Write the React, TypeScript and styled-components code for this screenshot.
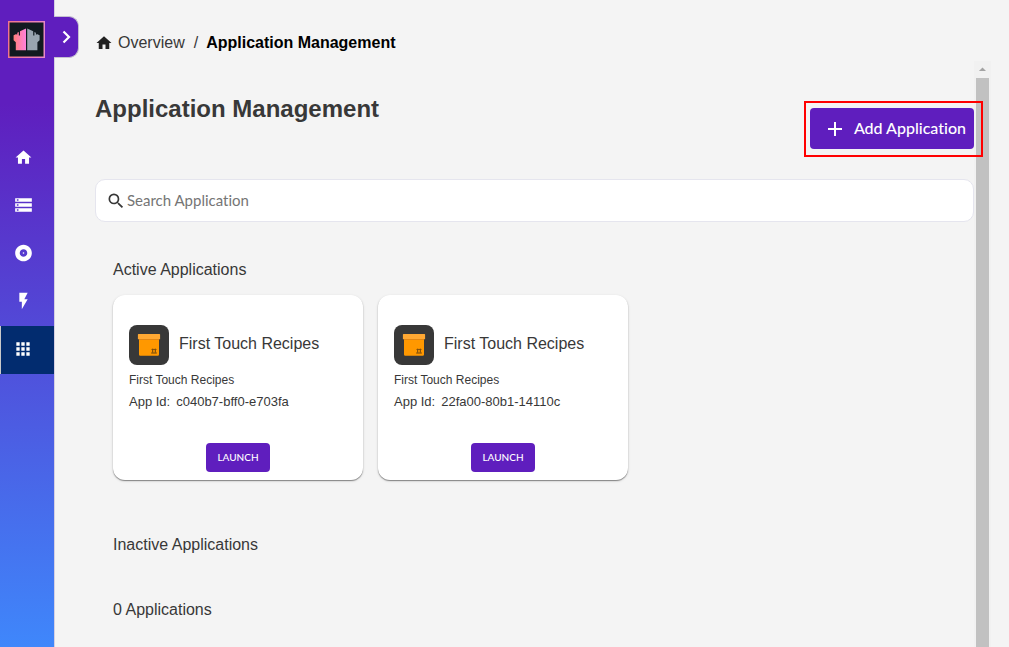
import React from "react";
import styled, { createGlobalStyle } from "styled-components";
import {
  MdAdd,
  MdAlbum,
  MdApps,
  MdArrowDropUp,
  MdFlashOn,
  MdHome,
  MdSearch,
  MdStorage,
} from "react-icons/md";

const sans = '"Liberation Sans", Arial, sans-serif';
const humanist = 'Lato, "Noto Sans", sans-serif';
const purple = "#5f1ebe";
const ink = "#383838";

const GlobalStyle = createGlobalStyle`
  *, *::before, *::after { box-sizing: border-box; }
  body { margin: 0; background: #f4f4f4; color: ${ink}; font-family: ${sans}; }
  h1, h2, h3, p, ul, ol { margin: 0; padding: 0; font-weight: 400; }
  ul, ol { list-style: none; }
  a { color: inherit; text-decoration: none; }
  button { border: 0; padding: 0; cursor: pointer; }
  svg { display: block; flex: none; }
`;

const Shell = styled.div`
  display: flex;
  height: 100vh;
  overflow: hidden;
`;

const Sidebar = styled.aside`
  position: relative;
  flex: none;
  width: 55px;
  border-right: 1px solid #d5d0e2;
  background: linear-gradient(180deg, ${purple} 0%, ${purple} 16%, #3f87fb 100%);
`;

const LogoLink = styled.a`
  display: block;
  padding: 21px 8px 76px;
`;

const Toggle = styled.button`
  position: absolute;
  top: 16px;
  left: 54px;
  display: flex;
  align-items: center;
  width: 25px;
  height: 42px;
  border: solid #c4bfd0;
  border-width: 1px 1px 1px 0;
  border-radius: 0 10px 10px 0;
  background: ${purple};
  color: #fff;
`;

const NavLink = styled.a<{ $active?: boolean }>`
  display: flex;
  align-items: center;
  height: 48px;
  padding-bottom: 2px;
  border-left: ${(p) => (p.$active ? "1px solid #c9c9c9" : "0")};
  background: ${(p) => (p.$active ? "#022c6f" : "transparent")};
  color: #fff;

  svg {
    width: ${(p) => (p.$active ? 44 : 47)}px;
  }
`;

const Main = styled.main`
  display: flex;
  flex: 1;
  flex-direction: column;
  min-width: 0;
`;

const Breadcrumb = styled.nav`
  flex: none;
  padding: 33px 40px 8px;

  ol {
    display: flex;
    align-items: center;
    font-size: 16px;
    line-height: 20px;
  }
`;

const Crumb = styled.li`
  display: flex;
  align-items: center;

  a {
    display: flex;
    align-items: center;
    gap: 5px;
  }

  & + &::before {
    content: "/";
    margin: 0 8px 0 9px;
  }

  &[aria-current] {
    color: #000;
    font-weight: 700;
  }

  &[aria-current]::before {
    color: ${ink};
    font-weight: 400;
  }
`;

const Body = styled.div`
  display: flex;
  flex: 1;
  min-height: 0;
  padding-right: 18px;
`;

const Content = styled.div`
  flex: 1;
  min-width: 0;
  padding-left: 40px;
`;

const ScrollTrack = styled.div`
  display: flex;
  flex: none;
  flex-direction: column;
  align-items: center;
  width: 17px;
  background: #f1f1f1;
  color: #a3a3a3;
`;

const ScrollThumb = styled.div`
  flex: 1;
  width: 13px;
  background: #c1c1c1;
`;

const PageHead = styled.header`
  display: flex;
  align-items: flex-start;
  justify-content: space-between;
  padding-top: 34px;

  h1 {
    font-size: 24px;
    font-weight: 700;
    line-height: 28px;
  }
`;

const Highlight = styled.div`
  position: relative;
  margin-top: 13px;

  &::after {
    content: "";
    position: absolute;
    inset: -7px -9px -8px -6px;
    border: 2px solid #f00;
    pointer-events: none;
  }
`;

const AddButton = styled.button`
  display: flex;
  align-items: center;
  gap: 7px;
  height: 41px;
  padding: 0 8px 0 13px;
  border-radius: 4px;
  background: ${purple};
  color: #fff;
  font: 500 16px/20px ${humanist};
  font-variant-ligatures: none;

  span {
    padding-bottom: 2px;
  }
`;

const SearchBox = styled.label`
  display: flex;
  align-items: center;
  height: 43px;
  margin-top: 30px;
  padding: 0 10px;
  gap: 1px;
  border: 1px solid #e5e5ee;
  border-radius: 10px;
  background: #fff;

  input {
    flex: 1;
    min-width: 0;
    border: 0;
    padding: 0 0 2px;
    outline: 0;
    background: transparent;
    color: ${ink};
    font: 400 15px/20px ${humanist};
    font-variant-ligatures: none;
  }

  input::placeholder {
    color: #757575;
    opacity: 1;
  }
`;

const Section = styled.section`
  padding: 38px 18px 17px;

  h2,
  > p {
    font-size: 16px;
    line-height: 20px;
  }

  > p {
    margin-top: 45px;
  }
`;

const Cards = styled.ul`
  display: flex;
  flex-wrap: wrap;
  gap: 15px;
  margin-top: 15px;
`;

const Card = styled.li`
  display: flex;
  flex-direction: column;
  width: 250px;
  height: 185px;
  padding: 30px 16px 8px;
  border-radius: 12px;
  background: #fff;
  box-shadow: 0 1px 1px rgba(0, 0, 0, 0.4), 0 1px 3px rgba(0, 0, 0, 0.14);
`;

const CardText = styled.p<{ $size: number }>`
  display: flex;
  gap: 6px;
  font-size: ${(p) => p.$size}px;
  line-height: 22px;
`;

const CardTitle = styled.div`
  display: flex;
  align-items: center;
  gap: 10px;
  margin-bottom: 4px;

  h3 {
    padding-bottom: 2px;
    font-size: 16px;
    line-height: 20px;
  }
`;

const Launch = styled.button`
  align-self: center;
  width: 64px;
  height: 29px;
  margin-top: auto;
  padding-bottom: 1px;
  border-radius: 4px;
  background: ${purple};
  color: #fff;
  font: 500 10px/16px ${humanist};
  text-transform: uppercase;
`;

const Logo = () => (
  <svg width="37" height="37" viewBox="0 0 37 37" aria-hidden="true">
    <defs>
      <linearGradient id="frame" x1="0" x2="1">
        <stop offset="0" stopColor="#f0768c" />
        <stop offset="1" stopColor="#e888c8" />
      </linearGradient>
      <linearGradient id="tower" x1="0" x2="1">
        <stop offset="0" stopColor="#ff7f7a" />
        <stop offset="1" stopColor="#ff80dc" />
      </linearGradient>
    </defs>
    <rect width="37" height="37" fill="url(#frame)" />
    <rect x="1.5" y="1.5" width="34" height="34" fill="#111a20" />
    <path d="M18 7.5 12 10.300v4.200H10.800V11L9.300 11.800v1.800H8.300v-.6L5.600 14.200v5l2.200 2V29.200H18z" fill="url(#tower)" />
    <path d="M19.200 7.5 25.200 10.300v4.200H26.400V11L27.900 11.800v1.800H28.900v-.6L31.600 14.200v5l-2.200 2V29.200H19.200z" fill="#98a4af" />
  </svg>
);

const Chevron = () => (
  <svg width="24" height="24" viewBox="0 0 24 24" aria-hidden="true">
    <path d="M9.500 6.500l5.500 5.500-5.500 5.500" fill="none" stroke="#fff" strokeWidth="2.200" />
  </svg>
);

const BoxIcon = () => (
  <svg width="40" height="40" viewBox="0 0 40 40" aria-hidden="true">
    <rect width="40" height="40" rx="8" fill="#383838" />
    <path d="M10 13h20v16.500a1.200 1.200 0 0 1-1.200 1.200H11.200a1.200 1.200 0 0 1-1.200-1.200z" fill="#ff9800" />
    <path d="M10 14h20v1H10z" fill="#d97b0b" />
    <path d="M9.500 9h21a.6.6 0 0 1 .6.6v4.600H8.900V9.600a.6.6 0 0 1 .6-.6z" fill="#ffa833" />
    <path d="M22.200 28h5.600M23.700 27.500v-3M26.300 27.500v-3M22.700 25l1-1.200 1 1.200M25.300 25l1-1.200 1 1.200" fill="none" stroke="#5a3a10" strokeWidth=".9" />
  </svg>
);

const navItems = [
  { label: "Home", Icon: MdHome, size: 19 },
  { label: "Servers", Icon: MdStorage, size: 20 },
  { label: "Volumes", Icon: MdAlbum, size: 20 },
  { label: "Actions", Icon: MdFlashOn, size: 20 },
  { label: "Applications", Icon: MdApps, size: 20, active: true },
];

const apps = [
  { name: "First Touch Recipes", id: "c040b7-bff0-e703fa" },
  { name: "First Touch Recipes", id: "22fa00-80b1-14110c" },
];

export default function App() {
  return (
    <Shell>
      <GlobalStyle />
      <Sidebar>
        <LogoLink href="#" aria-label="Dashboard">
          <Logo />
        </LogoLink>
        <Toggle type="button" aria-label="Expand menu">
          <Chevron />
        </Toggle>
        <nav aria-label="Main">
          {navItems.map(({ label, Icon, size, active }) => (
            <NavLink
              key={label}
              href="#"
              aria-label={label}
              aria-current={active ? "page" : undefined}
              $active={active}
            >
              <Icon size={size} />
            </NavLink>
          ))}
        </nav>
      </Sidebar>
      <Main>
        <Breadcrumb aria-label="Breadcrumb">
          <ol>
            <Crumb>
              <a href="#">
                <MdHome size={18} color="#222" />
                Overview
              </a>
            </Crumb>
            <Crumb aria-current="page">Application Management</Crumb>
          </ol>
        </Breadcrumb>
        <Body>
          <Content>
            <PageHead>
              <h1>Application Management</h1>
              <Highlight>
                <AddButton type="button">
                  <MdAdd size={24} />
                  <span>Add Application</span>
                </AddButton>
              </Highlight>
            </PageHead>
            <SearchBox>
              <MdSearch size={20} />
              <input type="search" placeholder="Search Application" aria-label="Search Application" />
            </SearchBox>
            <Section>
              <h2>Active Applications</h2>
              <Cards>
                {apps.map((app) => (
                  <Card key={app.id}>
                    <CardTitle>
                      <BoxIcon />
                      <h3>{app.name}</h3>
                    </CardTitle>
                    <CardText $size={12}>{app.name}</CardText>
                    <CardText $size={13}>
                      <span>App Id:</span>
                      <span>{app.id}</span>
                    </CardText>
                    <Launch type="button">Launch</Launch>
                  </Card>
                ))}
              </Cards>
            </Section>
            <Section>
              <h2>Inactive Applications</h2>
              <p>0 Applications</p>
            </Section>
          </Content>
          <ScrollTrack aria-hidden="true">
            <MdArrowDropUp size={17} />
            <ScrollThumb />
          </ScrollTrack>
        </Body>
      </Main>
    </Shell>
  );
}
